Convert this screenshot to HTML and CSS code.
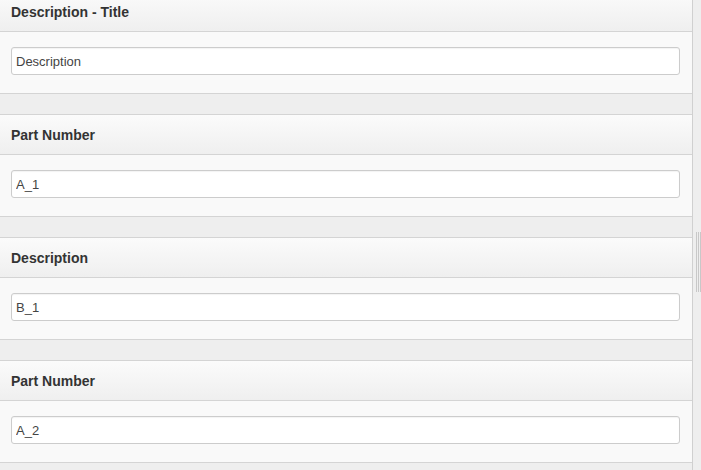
FILE: index.html
```html
<!DOCTYPE html>
<html>
<head>
<meta charset="utf-8">
<link rel="stylesheet" href="styles.css">
</head>
<body>
<div class="page">
  <div class="content">
    <div class="list">
      <section class="panel">
        <div class="panel-head">Description - Title</div>
        <div class="panel-body"><input class="field" type="text" value="Description"></div>
      </section>
      <section class="panel">
        <div class="panel-head">Part Number</div>
        <div class="panel-body"><input class="field" type="text" value="A_1"></div>
      </section>
      <section class="panel">
        <div class="panel-head">Description</div>
        <div class="panel-body"><input class="field" type="text" value="B_1"></div>
      </section>
      <section class="panel">
        <div class="panel-head">Part Number</div>
        <div class="panel-body"><input class="field" type="text" value="A_2"></div>
      </section>
    </div>
  </div>
  <div class="splitter"><div class="grip"></div></div>
</div>
</body>
</html>
```
FILE: styles.css
```css
html, body {
  margin: 0;
  padding: 0;
  height: 100%;
  overflow: hidden;
  background: #eeeeee;
}
.page {
  display: flex;
  height: 470px;
  font-family: "Liberation Sans", Arial, sans-serif;
}
.content {
  width: 692px;
  border-right: 1px solid #d0d0d0;
  background: #eeeeee;
  overflow: hidden;
}
.list {
  margin-top: -9px;
  display: flex;
  flex-direction: column;
  gap: 20px;
}
.panel {
  border-top: 1px solid #d4d4d4;
  border-bottom: 1px solid #d4d4d4;
}
.panel-head {
  height: 40px;
  box-sizing: border-box;
  padding-left: 11px;
  display: flex;
  align-items: center;
  font-size: 14px;
  font-weight: bold;
  color: #333333;
  background: linear-gradient(#fbfbfb, #efefef);
  border-bottom: 1px solid #d4d4d4;
}
.panel-body {
  background: #f9f9f9;
  padding: 15px 12px 18px 11px;
}
.field {
  display: block;
  box-sizing: border-box;
  width: 669px;
  height: 28px;
  margin: 0;
  padding: 0 4px;
  border: 1px solid #cccccc;
  border-radius: 3px;
  background: #ffffff;
  font-family: "Liberation Sans", Arial, sans-serif;
  font-size: 13px;
  color: #444444;
  box-shadow: inset 0 1px 1px rgba(0,0,0,0.05);
  outline: none;
}
.splitter {
  flex: 1;
  background: #eeeeee;
  display: flex;
  align-items: flex-start;
  justify-content: flex-end;
}
.grip {
  margin-top: 232px;
  width: 5px;
  height: 60px;
  background: repeating-linear-gradient(90deg, #c8c8c8 0 1px, transparent 1px 2px);
}
```
